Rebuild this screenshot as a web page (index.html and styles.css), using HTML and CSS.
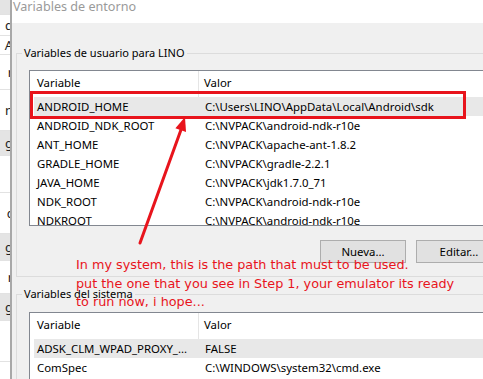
FILE: index.html
```html
<!DOCTYPE html>
<html>
<head>
<meta charset="utf-8">
<link rel="stylesheet" href="styles.css">
</head>
<body>
<div class="screen">
  <div class="bgwin">
    <div class="bg-row h14 shade"></div>
    <div class="bg-row h20"><span>d</span></div>
    <div class="bg-row h18"><span>A</span></div>
    <div class="bg-row h34"><span>r</span></div>
    <div class="bg-row h40"><span>n</span></div>
    <div class="bg-row h24 shade"><span class="u">g</span></div>
    <div class="bg-row h36"></div>
    <div class="bg-row h40"><span>c</span></div>
    <div class="bg-row h26 shade"><span class="u">g</span></div>
    <div class="bg-row h32"><span>r</span></div>
    <div class="bg-row h26 shade"><span class="u">g</span></div>
    <div class="bg-row h40"></div>
  </div>
  <div class="dialog">
    <div class="titlebar">Variables de entorno</div>
    <div class="body">
      <fieldset class="group user">
        <legend>Variables de usuario para LINO</legend>
        <div class="list">
          <div class="lhead"><span class="hc1">Variable</span><span class="hc2">Valor</span></div>
          <div class="row sel"><span>ANDROID_HOME</span><span class="v">C:\Users\LINO\AppData\Local\Android\sdk</span></div>
          <div class="row"><span>ANDROID_NDK_ROOT</span><span class="v">C:\NVPACK\android-ndk-r10e</span></div>
          <div class="row"><span>ANT_HOME</span><span class="v">C:\NVPACK\apache-ant-1.8.2</span></div>
          <div class="row"><span>GRADLE_HOME</span><span class="v">C:\NVPACK\gradle-2.2.1</span></div>
          <div class="row"><span>JAVA_HOME</span><span class="v">C:\NVPACK\jdk1.7.0_71</span></div>
          <div class="row"><span>NDK_ROOT</span><span class="v">C:\NVPACK\android-ndk-r10e</span></div>
          <div class="row"><span>NDKROOT</span><span class="v">C:\NVPACK\android-ndk-r10e</span></div>
        </div>
        <div class="buttons">
          <button class="btn">Nueva...</button>
          <button class="btn">Editar...</button>
        </div>
      </fieldset>
      <fieldset class="group sys">
        <legend>Variables del sistema</legend>
        <div class="list short">
          <div class="lhead"><span class="hc1">Variable</span><span class="hc2">Valor</span></div>
          <div class="row sel"><span>ADSK_CLM_WPAD_PROXY_...</span><span class="v">FALSE</span></div>
          <div class="row"><span>ComSpec</span><span class="v">C:\WINDOWS\system32\cmd.exe</span></div>
        </div>
      </fieldset>
    </div>
  </div>
  <div class="redbox"></div>
  <svg class="arrow" width="483" height="379" viewBox="0 0 483 379">
    <line x1="140" y1="243" x2="182" y2="127" stroke="#e8141c" stroke-width="3" stroke-linecap="round"/>
    <polygon points="185,117 186,132 175.4,128.3" fill="#e8141c"/>
  </svg>
  <div class="note">In my system, this is the path that must to be used.<br>put the one that you see in Step 1, your emulator its ready<br>to run now, i hope...</div>
</div>
</body>
</html>
```
FILE: styles.css
```css
html, body {
  margin: 0;
  padding: 0;
  background: #f0f0f0;
}
body {
  width: 483px;
  height: 379px;
  overflow: hidden;
  font-family: "Noto Sans", "Open Sans", sans-serif;
  font-size: 11.4px;
  color: #000;
}
.screen {
  position: relative;
  display: flex;
  width: 483px;
  height: 379px;
  overflow: hidden;
}
.bgwin {
  flex: none;
  width: 10px;
  background: #fff;
  border-right: 2px solid #a8a8a8;
  overflow: hidden;
}
.bg-row {
  border-bottom: 1px solid #e2e2e2;
  display: flex;
  align-items: center;
  justify-content: flex-end;
  overflow: hidden;
  font-size: 13px;
  color: #222;
}
.bg-row span { margin-right: -3px; }
.bg-row .u { text-decoration: underline; }
.bg-row.shade { background: #e4e4e4; }
.h14 { height: 14px; }
.h18 { height: 18px; }
.h20 { height: 20px; }
.h24 { height: 24px; }
.h26 { height: 26px; }
.h32 { height: 32px; }
.h34 { height: 34px; }
.h36 { height: 36px; }
.h40 { height: 40px; }

.dialog {
  flex: none;
  width: 530px;
  background: #f0f0f0;
}
.titlebar {
  height: 23px;
  background: #fff;
  color: #9a9a9a;
  font-size: 12.6px;
  line-height: 14px;
  padding-left: 1px;
  box-sizing: border-box;
}
.body {
  padding: 22px 0 0 4px;
}
.group {
  margin: 0;
  border: 1px solid #dcdcdc;
  padding: 9px 12px 13px 12px;
  min-width: 0;
}
.group legend {
  padding: 0 2px;
  margin-left: -7px;
  line-height: 16px;
  font-size: 11px;
}
.group.sys {
  margin-top: 9px;
  padding-top: 10px;
}
.list {
  background: #fff;
  border: 1px solid #828790;
  height: 156px;
  box-sizing: border-box;
  overflow: hidden;
}
.lhead {
  display: grid;
  grid-template-columns: 169px 1fr;
  height: 26px;
  align-items: stretch;
}
.hc1 {
  padding-left: 7px;
  padding-bottom: 3px;
  border-right: 1px solid #e5e5e5;
  display: flex;
  align-items: center;
}
.hc2 {
  padding-left: 5px;
  padding-bottom: 3px;
  display: flex;
  align-items: center;
}
.row {
  display: grid;
  grid-template-columns: 165px 1fr;
  height: 19px;
  line-height: 19px;
  margin-left: 4px;
  white-space: nowrap;
}
.row span:first-child { padding-left: 3px; }
.row .v { padding-left: 6px; }
.row.sel { background: #e8e8e8; }

.buttons {
  display: flex;
  gap: 10px;
  margin-top: 14px;
  margin-left: 291px;
}
.btn {
  flex: none;
  width: 86px;
  height: 23px;
  background: #e1e1e1;
  border: 1px solid #adadad;
  font-family: inherit;
  font-size: 11.4px;
  color: #000;
  padding: 0;
  margin: 0;
}

.redbox {
  position: absolute;
  left: 30px;
  top: 91px;
  width: 436px;
  height: 28px;
  border: 3px solid #e8141c;
  box-sizing: border-box;
}
.arrow {
  position: absolute;
  left: 0;
  top: 0;
}
.note {
  position: absolute;
  left: 76px;
  top: 256px;
  font-family: "DejaVu Sans", sans-serif;
  font-size: 12.8px;
  line-height: 18.5px;
  color: #e8141c;
  white-space: nowrap;
}
```
